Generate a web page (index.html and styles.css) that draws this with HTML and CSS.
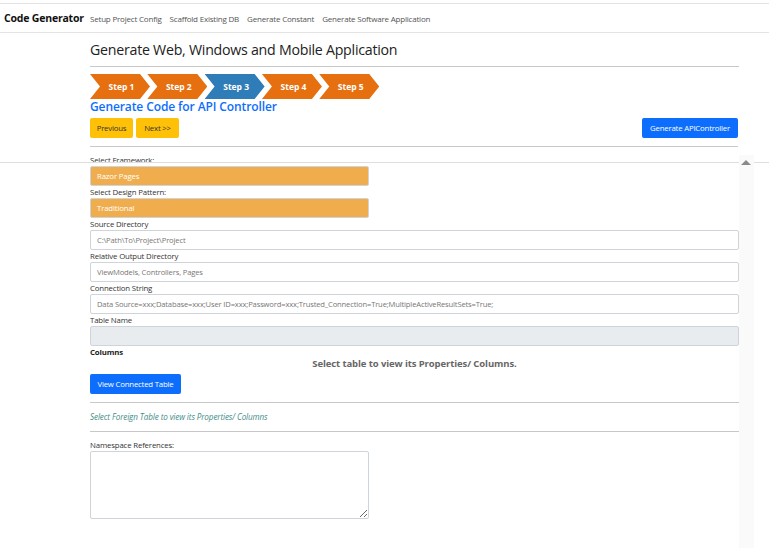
FILE: index.html
```html
<!DOCTYPE html>
<html lang="en">
<head>
<meta charset="utf-8">
<title>Code Generator</title>
<link rel="stylesheet" href="styles.css">
</head>
<body>
<header class="navbar">
  <span class="brand">Code Generator</span>
  <nav class="nav">
    <a href="#">Setup Project Config</a>
    <a href="#">Scaffold Existing DB</a>
    <a href="#">Generate Constant</a>
    <a href="#">Generate Software Application</a>
  </nav>
</header>
<main class="container">
  <h1 class="title">Generate Web, Windows and Mobile Application</h1>
  <hr class="rule">
  <div class="steps">
    <span class="step">Step 1</span>
    <span class="step">Step 2</span>
    <span class="step active">Step 3</span>
    <span class="step">Step 4</span>
    <span class="step">Step 5</span>
  </div>
  <h2 class="subtitle">Generate Code for API Controller</h2>
  <div class="actions">
    <div class="nav-btns">
      <button class="btn btn-warning">Previous</button>
      <button class="btn btn-warning">Next &gt;&gt;</button>
    </div>
    <button class="btn btn-primary btn-gen">Generate APIController</button>
  </div>
  <hr class="rule rule-actions">
  <form class="form">
    <label class="lbl">Select Framework:</label>
    <div class="select">Razor Pages</div>
    <label class="lbl">Select Design Pattern:</label>
    <div class="select">Traditional</div>
    <label class="lbl">Source Directory</label>
    <input class="input" placeholder="C:\Path\To\Project\Project">
    <label class="lbl">Relative Output Directory</label>
    <input class="input" placeholder="ViewModels, Controllers, Pages">
    <label class="lbl">Connection String</label>
    <input class="input" placeholder="Data Source=xxx;Database=xxx;User ID=xxx;Password=xxx;Trusted_Connection=True;MultipleActiveResultSets=True;">
    <label class="lbl">Table Name</label>
    <input class="input" disabled>
    <div class="lbl bold">Columns</div>
    <div class="empty">Select table to view its Properties/ Columns.</div>
    <div><button type="button" class="btn btn-primary btn-view">View Connected Table</button></div>
    <hr class="rule rule-mid">
    <div class="foreign">Select Foreign Table to view its Properties/ Columns</div>
    <hr class="rule rule-low">
    <label class="lbl">Namespace References:</label>
    <textarea class="textarea"></textarea>
  </form>
</main>
<div class="sticky-line"></div>
<div class="scrollbar"><span class="arrow"></span></div>
</body>
</html>
```
FILE: styles.css
```css
* { box-sizing: border-box; }
html, body { margin: 0; padding: 0; background: #fff; }
body {
  font-family: "Open Sans", "Noto Sans", sans-serif;
  color: #212529;
  width: 769px;
  height: 548px;
  overflow: hidden;
  position: relative;
}
.navbar {
  margin-top: 3px;
  height: 30px;
  border-top: 1px solid #e3e3e3;
  border-bottom: 1px solid #e3e3e3;
  display: flex;
  align-items: center;
}
.brand {
  width: 90px;
  padding-left: 4px;
  font-size: 10.5px;
  font-weight: 700;
  color: #111;
  letter-spacing: -0.2px;
}
.nav { display: flex; gap: 8px; }
.nav a {
  font-size: 8px;
  color: #555;
  text-decoration: none;
  letter-spacing: -0.2px;
}
.container {
  padding-left: 90px;
  width: 739px;
}
.title {
  margin: 0;
  padding-top: 7px;
  height: 33px;
  font-size: 14.2px;
  font-weight: 400;
  line-height: 19px;
  letter-spacing: -0.25px;
  color: #222;
}
.rule {
  margin: 0;
  border: 0;
  border-top: 1px solid #c8c8c8;
  height: 0;
}
.steps {
  display: flex;
  margin-top: 7px;
  height: 25px;
}
.step {
  width: 60px;
  height: 25px;
  margin-right: -2.7px;
  background: #e6700f;
  color: #fff;
  font-size: 8.5px;
  font-weight: 700;
  display: flex;
  align-items: center;
  justify-content: center;
  padding-left: 3px;
  clip-path: polygon(0 0, 50px 0, 60px 50%, 50px 100%, 0 100%, 10px 50%);
}
.step.active { background: #2f7db8; }
.subtitle {
  margin: 0;
  font-size: 12px;
  font-weight: 600;
  line-height: 16px;
  color: #0d6efd;
  letter-spacing: -0.1px;
}
.actions {
  display: flex;
  justify-content: space-between;
  margin-top: 3px;
  width: 648px;
}
.nav-btns { display: flex; gap: 3px; }
.btn {
  border: 0;
  border-radius: 2px;
  height: 20px;
  padding: 0 7px;
  font-family: inherit;
  font-size: 7.8px;
  letter-spacing: -0.2px;
  cursor: pointer;
}
.btn-warning { background: #ffc107; color: #333; width: 43px; padding: 0; }
.btn-primary { background: #0d6efd; color: #fff; }
.btn-gen { width: 96px; padding: 0; }
.rule-actions { margin-top: 8px; width: 648px; }
.form {
  display: flex;
  flex-direction: column;
  padding-top: 7px;
  width: 649px;
}
.lbl {
  font-size: 7.8px;
  line-height: 12px;
  height: 12px;
  color: #333;
  letter-spacing: -0.15px;
}
.bold { font-weight: 700; color: #222; }
.select {
  width: 279px;
  height: 20px;
  background: #f0ad4e;
  border: 1px solid #ced4da;
  border-radius: 2px;
  color: #fff;
  font-size: 7.8px;
  line-height: 18px;
  padding-left: 6px;
  letter-spacing: -0.15px;
}
.input {
  width: 649px;
  height: 20px;
  border: 1px solid #ced4da;
  border-radius: 2px;
  padding: 0 6px;
  font-family: inherit;
  font-size: 7.6px;
  letter-spacing: -0.15px;
  background: #fff;
  outline: none;
}
.input::placeholder { color: #777; }
.input:disabled { background: #e9ecef; }
.empty {
  text-align: center;
  font-size: 9.5px;
  font-weight: 700;
  color: #666;
  line-height: 12px;
  height: 12px;
  letter-spacing: -0.1px;
}
.btn-view { margin-top: 4px; width: 91px; padding: 0; }
.rule-mid { margin-top: 8px; }
.foreign {
  margin-top: 8px;
  font-size: 8.1px;
  font-style: italic;
  color: #3f8d8a;
  line-height: 12px;
  letter-spacing: -0.1px;
}
.rule-low { margin-top: 8px; }
.rule-low + .lbl { margin-top: 7px; }
.textarea {
  width: 279px;
  height: 68px;
  border: 1px solid #ced4da;
  border-radius: 2px;
  resize: vertical;
  font-family: inherit;
}
.sticky-line {
  position: absolute;
  left: 0;
  top: 162px;
  width: 769px;
  border-top: 1px solid #dedede;
}
.scrollbar {
  position: absolute;
  left: 739px;
  top: 155px;
  width: 15px;
  height: 393px;
  background: #fafafa;
}
.arrow {
  position: absolute;
  left: 2px;
  top: 5px;
  width: 0;
  height: 0;
  border-left: 5.5px solid transparent;
  border-right: 5.5px solid transparent;
  border-bottom: 5px solid #8a8a8a;
}
```
